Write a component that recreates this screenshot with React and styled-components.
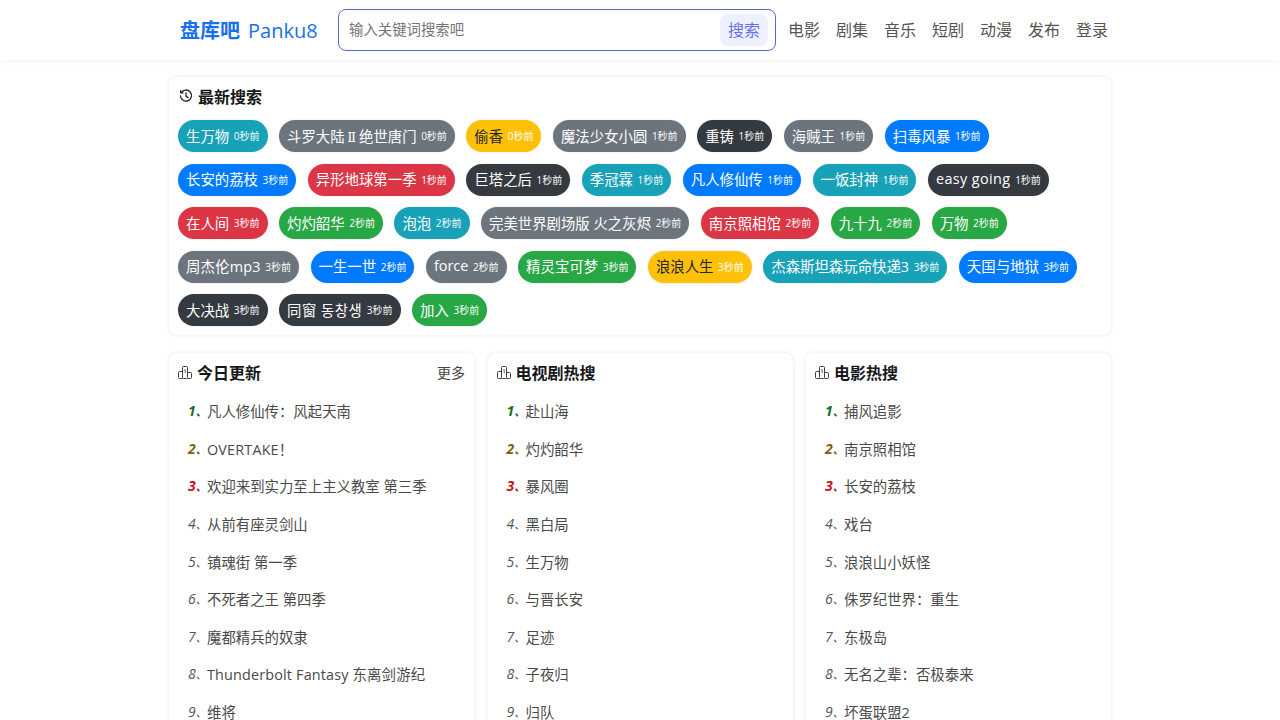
import styled, { createGlobalStyle } from "styled-components";

const GlobalStyle = createGlobalStyle`
  html, body {
    margin: 0;
    padding: 0;
    height: 720px;
    overflow: hidden;
    background: #fff;
    color: #212529;
    font-family: "Open Sans", "Noto Sans CJK SC", sans-serif;
  }
  * { box-sizing: border-box; }
`;

const Header = styled.header`
  height: 60px;
  background: #fff;
  box-shadow: 0 2px 6px rgba(0, 0, 0, 0.035);
  display: flex;
  justify-content: center;
`;

const HeaderInner = styled.div`
  width: 960px;
  padding-left: 20px;
  display: flex;
  align-items: center;
`;

const Logo = styled.a`
  width: 158px;
  padding-bottom: 2px;
  font-size: 20px;
  color: #1670f0;
  white-space: nowrap;
  b { margin-right: 8px; font-weight: 700; }
`;

const SearchBox = styled.div`
  width: 438px;
  height: 42px;
  border: 1px solid #5a67d8;
  border-radius: 8px;
  display: flex;
  align-items: center;
  padding: 0 7px 0 8px;
`;

const SearchInput = styled.input`
  flex: 1;
  border: none;
  outline: none;
  font: inherit;
  font-size: 14.4px;
  color: #333;
  background: transparent;
  padding: 0 2px 2px;
  &::placeholder { color: #757575; }
`;

const SearchButton = styled.button`
  width: 48px;
  height: 32px;
  border: none;
  border-radius: 8px;
  background: #eef0ff;
  color: #6670ee;
  font: inherit;
  font-size: 16px;
  padding: 0 0 2px;
`;

const Nav = styled.nav`
  display: flex;
  gap: 16px;
  margin-left: 12px;
  padding-bottom: 2px;
`;

const NavLink = styled.a`
  font-size: 16px;
  color: #555;
`;

const Main = styled.main`
  width: 942px;
  margin: 17px auto 0;
  display: flex;
  flex-direction: column;
  gap: 18px;
`;

const Card = styled.section`
  background: #fff;
  border-radius: 8px;
  box-shadow: 0 0 4px rgba(0, 0, 0, 0.1);
  padding: 9px;
`;

const CardTitle = styled.div`
  height: 20px;
  display: flex;
  align-items: center;
  gap: 5px;
  font-size: 16px;
  font-weight: 700;
  color: #16191c;
  svg { flex: none; }
`;

const More = styled.a`
  margin-left: auto;
  font-size: 14px;
  font-weight: 400;
  color: #444;
  margin-top: -1px;
`;

const Chips = styled.div`
  display: flex;
  flex-wrap: wrap;
  gap: 11.5px;
  margin-top: 14px;
`;

const chipColors = {
  info: ["#17a2b8", "#fff"],
  gray: ["#6c757d", "#fff"],
  warn: ["#ffc107", "#212529"],
  dark: ["#343a40", "#fff"],
  blue: ["#007bff", "#fff"],
  red: ["#dc3545", "#fff"],
  green: ["#28a745", "#fff"],
};

const Chip = styled.a`
  height: 32px;
  padding: 0 8px 2px;
  border-radius: 16px;
  display: flex;
  align-items: center;
  gap: 4.6px;
  font-size: 14.4px;
  white-space: pre;
  background: ${(p) => chipColors[p.$kind][0]};
  color: ${(p) => chipColors[p.$kind][1]};
  box-shadow: 0 0 0 1px rgba(0, 0, 0, 0.04);
`;

const ChipName = styled.span`
  display: inline-block;
  letter-spacing: ${(p) => p.$track || 0}px;
`;

const Roman = styled.span`
  display: inline-block;
  width: 1em;
  text-align: center;
  font-family: "DejaVu Serif", serif;
  font-size: 13px;
  margin: 0 0.7px;
`;

const ChipTime = styled.span`
  font-size: 10px;
  color: #fff;
  margin-top: 1px;
`;

const Columns = styled.div`
  display: grid;
  grid-template-columns: repeat(3, 305px);
  justify-content: space-between;
`;

const List = styled.ol`
  list-style: none;
  margin: 0;
  padding: 0 0 0 10px;
`;

const Row = styled.li`
  height: 37.6px;
  display: flex;
  align-items: center;
  font-size: 14.4px;
  color: #4a4a4a;
  &:first-child { margin-top: 10px; }
`;

const RowText = styled.span`
  white-space: pre;
  letter-spacing: ${(p) => (p.$latin ? "0.16px" : "0")};
`;

const rankColors = ["#166c1d", "#7a6210", "#c4141c"];

const Rank = styled.i`
  flex: none;
  width: 19px;
  font-size: 14px;
  font-weight: ${(p) => (p.$rank <= 3 ? 700 : 400)};
  color: ${(p) => (p.$rank <= 3 ? rankColors[p.$rank - 1] : "#555")};
`;

const RankMark = styled.span`
  font-size: 11px;
`;

const HistorySvg = styled.svg`
  margin-left: 1px;
`;

const HistoryIcon = () => (
  <HistorySvg width="14" height="14" viewBox="0 0 16 16" fill="none" stroke="#212529" strokeWidth="1.5" strokeLinecap="round" strokeLinejoin="round">
    <path d="M2.6 4.2A6.3 6.3 0 1 1 1.7 8" />
    <path d="M1.9 1.9v2.6h2.6" />
    <path d="M8 4.4V8.4l2.4 1.4" />
  </HistorySvg>
);

const PodiumIcon = () => (
  <svg width="14" height="14" viewBox="0 0 14 14" fill="none" stroke="#3a3f45" strokeWidth="1" strokeLinejoin="round">
    <path d="M4.5 13.5H1.5a1 1 0 0 1-1-1V7.5a1 1 0 0 1 1-1h3" />
    <path d="M9.5 13.5h3a1 1 0 0 0 1-1V8.5a1 1 0 0 0-1-1h-3" />
    <rect x="4.5" y="1.5" width="5" height="12" rx="1" />
    <path d="M6.4 5 7.2 4.4V8" strokeWidth="0.8" />
  </svg>
);

const searches = [
  ["生万物", "0秒前", "info"], [<>斗罗大陆<Roman>Ⅱ</Roman>绝世唐门</>, "0秒前", "gray"], ["偷香", "0秒前", "warn"],
  ["魔法少女小圆", "1秒前", "gray"], ["重铸", "1秒前", "dark"], ["海贼王", "1秒前", "gray"], ["扫毒风暴", "1秒前", "blue"],
  ["长安的荔枝", "3秒前", "blue"], ["异形地球第一季", "1秒前", "red"], ["巨塔之后", "1秒前", "dark"], ["季冠霖", "1秒前", "info"],
  ["凡人修仙传", "1秒前", "blue"], ["一饭封神", "1秒前", "info"], ["easy going", "1秒前", "dark", 0.4],
  ["在人间", "3秒前", "red"], ["灼灼韶华", "2秒前", "green"], ["泡泡", "2秒前", "info"], ["完美世界剧场版 火之灰烬", "2秒前", "gray"],
  ["南京照相馆", "2秒前", "red"], ["九十九", "2秒前", "green"], ["万物", "2秒前", "green"],
  ["周杰伦mp3", "3秒前", "gray", 0.2], ["一生一世", "2秒前", "blue"], ["force", "2秒前", "gray"], ["精灵宝可梦", "3秒前", "green"],
  ["浪浪人生", "3秒前", "warn"], ["杰森斯坦森玩命快递3", "3秒前", "info"], ["天国与地狱", "3秒前", "blue"],
  ["大决战", "3秒前", "dark"], ["同窗 동창생", "3秒前", "dark", 0.5], ["加入", "3秒前", "green"],
];

const boards = [
  {
    title: "今日更新",
    more: true,
    items: ["凡人修仙传：风起天南", "OVERTAKE！", "欢迎来到实力至上主义教室 第三季", "从前有座灵剑山", "镇魂街 第一季", "不死者之王 第四季", "魔都精兵的奴隶", "Thunderbolt Fantasy 东离剑游纪", "维将"],
  },
  {
    title: "电视剧热搜",
    items: ["赴山海", "灼灼韶华", "暴风圈", "黑白局", "生万物", "与晋长安", "足迹", "子夜归", "归队"],
  },
  {
    title: "电影热搜",
    items: ["捕风追影", "南京照相馆", "长安的荔枝", "戏台", "浪浪山小妖怪", "侏罗纪世界：重生", "东极岛", "无名之辈：否极泰来", "坏蛋联盟2"],
  },
];

const navItems = ["电影", "剧集", "音乐", "短剧", "动漫", "发布", "登录"];

export default function App() {
  return (
    <>
      <GlobalStyle />
      <Header>
        <HeaderInner>
          <Logo><b>盘库吧</b>Panku8</Logo>
          <SearchBox>
            <SearchInput placeholder="输入关键词搜索吧" />
            <SearchButton>搜索</SearchButton>
          </SearchBox>
          <Nav>
            {navItems.map((n) => <NavLink key={n}>{n}</NavLink>)}
          </Nav>
        </HeaderInner>
      </Header>
      <Main>
        <Card>
          <CardTitle><HistoryIcon />最新搜索</CardTitle>
          <Chips>
            {searches.map(([name, time, kind, track], i) => (
              <Chip key={i} $kind={kind}>
                <ChipName $track={track}>{name}</ChipName>
                <ChipTime>{time}</ChipTime>
              </Chip>
            ))}
          </Chips>
        </Card>
        <Columns>
          {boards.map((b) => (
            <Card key={b.title}>
              <CardTitle>
                <PodiumIcon />{b.title}
                {b.more && <More>更多</More>}
              </CardTitle>
              <List>
                {b.items.map((item, i) => (
                  <Row key={item}>
                    <Rank $rank={i + 1}>{i + 1}<RankMark>、</RankMark></Rank>
                    <RowText $latin={/^[A-Z]/.test(item)}>{item}</RowText>
                  </Row>
                ))}
              </List>
            </Card>
          ))}
        </Columns>
      </Main>
    </>
  );
}
